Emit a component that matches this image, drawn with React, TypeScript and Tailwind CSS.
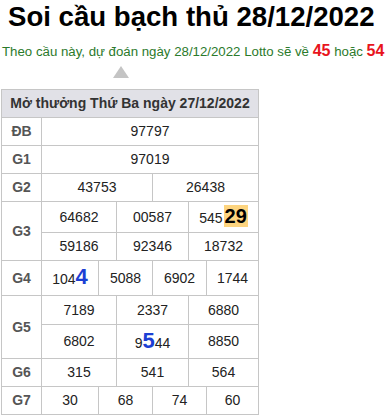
import React from "react";

type Cell = React.ReactNode;

const big = (d: string) => (
  <span className="text-[22px] font-bold leading-none text-[#1c3fd4]">{d}</span>
);

function Row({
  label,
  lines,
  widths,
  heights,
}: {
  label: string;
  lines: Cell[][];
  widths: string[];
  heights: string[];
}) {
  return (
    <div className="flex border-b border-[#c6c6c6] last:border-b-0">
      <div className="w-[40px] shrink-0 border-r border-[#c6c6c6] flex items-center justify-center font-bold text-[14px] text-[#555]">
        {label}
      </div>
      <div className="flex-1 flex flex-col">
        {lines.map((cells, li) => (
          <div
            key={li}
            className={`flex ${heights[li]} ${li < lines.length - 1 ? "border-b border-[#c6c6c6]" : ""}`}
          >
            {cells.map((c, ci) => (
              <div
                key={ci}
                className={`${ci < cells.length - 1 ? widths[ci] + " border-r border-[#c6c6c6]" : "flex-1"} flex items-center justify-center text-[14px] text-[#222]`}
              >
                <span>{c}</span>
              </div>
            ))}
          </div>
        ))}
      </div>
    </div>
  );
}

const three = ["w-[75px]", "w-[72px]"];
const four = ["w-[57px]", "w-[54px]", "w-[54px]"];

export default function App() {
  return (
    <div className="w-[391px] h-[415px] bg-white overflow-hidden font-['Liberation_Sans',Arial,sans-serif]">
      <h1 className="pl-2 pt-px text-[27.6px] leading-[32px] font-bold text-black">
        Soi cầu bạch thủ 28/12/2022
      </h1>
      <p className="mt-[9px] pl-[2px] text-[13.25px] leading-[18px] text-[#2b7a2b] whitespace-nowrap">
        Theo cầu này, dự đoán ngày 28/12/2022 Lotto sẽ về{" "}
        <span className="text-[16px] font-bold text-[#e8141c]">45</span> hoặc{" "}
        <span className="text-[16px] font-bold text-[#e8141c]">54</span>
      </p>
      <div className="pl-[113px] mt-[5px] h-[12px]">
        <svg width="16" height="12" viewBox="0 0 16 12">
          <polygon points="8,0 16,12 0,12" fill="#c4c4c4" />
        </svg>
      </div>
      <div className="mt-[11px] ml-px w-[258px] border border-[#c6c6c6]">
        <div className="h-[28px] bg-[#e1e1e7] border-b border-[#c6c6c6] flex items-center justify-center font-bold text-[14px] text-[#333]">
          Mở thưởng Thứ Ba ngày 27/12/2022
        </div>
        <Row label="ĐB" lines={[["97797"]]} widths={[]} heights={["h-[27px]"]} />
        <Row label="G1" lines={[["97019"]]} widths={[]} heights={["h-[27px]"]} />
        <Row
          label="G2"
          lines={[["43753", "26438"]]}
          widths={["w-[111px]"]}
          heights={["h-[27px]"]}
        />
        <Row
          label="G3"
          lines={[
            [
              "64682",
              "00587",
              <>
                545
                <span className="inline-block ml-px px-px bg-[#fdd47f] text-[20px] leading-[22px] font-bold text-black">
                  29
                </span>
              </>,
            ],
            ["59186", "92346", "18732"],
          ]}
          widths={three}
          heights={["h-[31px]", "h-[27px]"]}
        />
        <Row
          label="G4"
          lines={[[<>104{big("4")}</>, "5088", "6902", "1744"]]}
          widths={four}
          heights={["h-[34px]"]}
        />
        <Row
          label="G5"
          lines={[
            ["7189", "2337", "6880"],
            ["6802", <>9{big("5")}44</>, "8850"],
          ]}
          widths={three}
          heights={["h-[29px]", "h-[33px]"]}
        />
        <Row
          label="G6"
          lines={[["315", "541", "564"]]}
          widths={three}
          heights={["h-[27px]"]}
        />
        <Row
          label="G7"
          lines={[["30", "68", "74", "60"]]}
          widths={four}
          heights={["h-[27px]"]}
        />
      </div>
    </div>
  );
}
